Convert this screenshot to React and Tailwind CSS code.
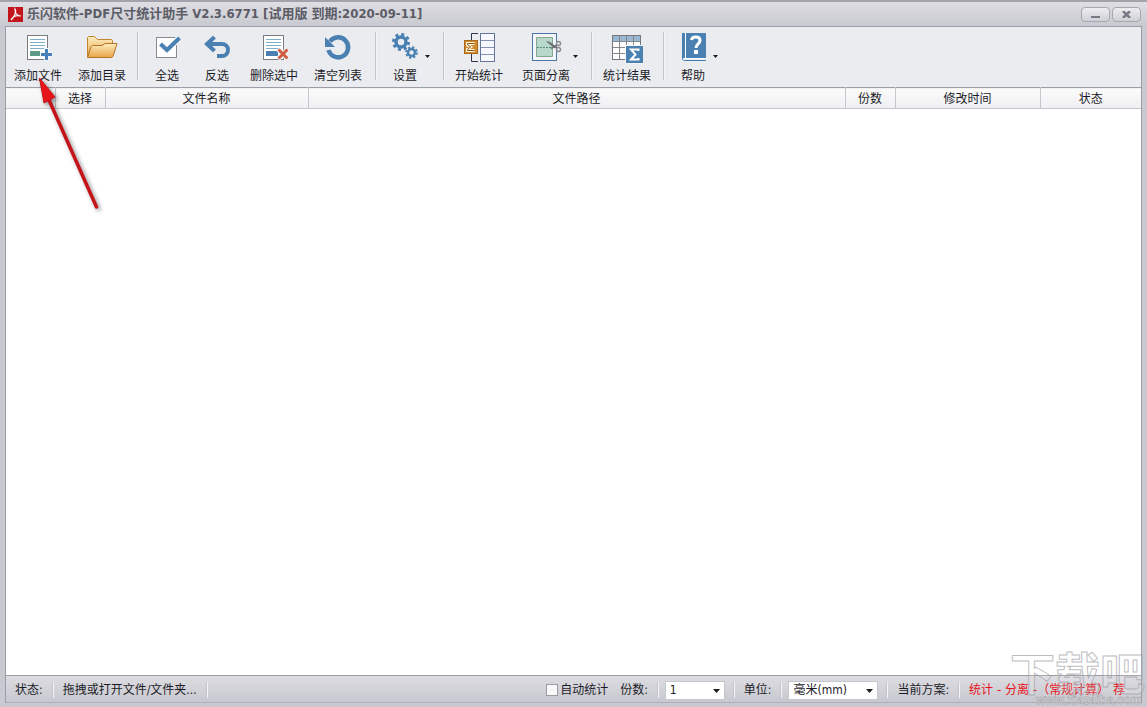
import React from 'react';

const FONT = "font-['DejaVu_Sans_Condensed','Noto_Sans_CJK_SC',sans-serif]";

const PageLines = () => (
  <>
    <rect x="5.5" y="3.5" width="20" height="24" fill="#fff" stroke="#7c7c7c" />
    <path d="M8 7.5h15M8 10.5h15M8 13.5h15M8 16.5h15" stroke="#7fb0c8" />
  </>
);

const AddFileIcon = () => (
  <svg className="h-8 w-8" viewBox="0 0 32 32" fill="none">
    <PageLines />
    <rect x="8" y="19" width="10" height="5" fill="#5e9c87" />
    <path d="M24.5 16v13M18 22.5h13" stroke="#f4f5f9" strokeWidth="5" />
    <path d="M24.5 17v11M19 22.5h11" stroke="#4580b8" strokeWidth="3" />
  </svg>
);

const FolderIcon = () => (
  <svg className="h-8 w-8" viewBox="0 0 32 32" fill="none">
    <defs>
      <linearGradient id="folder" x1="0" y1="0" x2="0" y2="1">
        <stop offset="0" stopColor="#fdedc0" />
        <stop offset="1" stopColor="#e9a446" />
      </linearGradient>
    </defs>
    <path d="M1.5 25V5.5l1-1h6l3 3h14l1 1V13" fill="url(#folder)" stroke="#c1862f" />
    <path d="M1.5 25.5 5 15l1.500-1.500H16l3-2h12L27 24.500l-1.500 1z" fill="url(#folder)" stroke="#b57424" />
  </svg>
);

const CheckIcon = () => (
  <svg className="h-8 w-8" viewBox="0 0 32 32" fill="none">
    <rect x="5.5" y="5.5" width="20" height="20" fill="#fff" stroke="#8a8a8c" />
    <path d="m9.500 12.500 7 6L28 6" stroke="#f7f8fb" strokeWidth="6" />
    <path d="m9.500 12 6.500 6L28.500 6" stroke="#4a80b2" strokeWidth="4" />
  </svg>
);

const InvertIcon = () => (
  <svg className="h-8 w-8" viewBox="0 0 32 32" fill="none">
    <path d="M6 12h15a6 6 0 0 1 0 12h-5" stroke="#4a80b2" strokeWidth="4" />
    <path d="M13.5 5 6 12l7.500 7" stroke="#4a80b2" strokeWidth="4" />
  </svg>
);

const DeleteIcon = () => (
  <svg className="h-8 w-8" viewBox="0 0 32 32" fill="none">
    <PageLines />
    <rect x="8" y="19" width="12" height="5" fill="#4a80b2" />
    <path d="m20 17 10 10M30 17 20 27" stroke="#f4f5f9" strokeWidth="5" />
    <path d="m20.500 17.500 9 9M29.500 17.500l-9 9" stroke="#cf5b40" strokeWidth="3" />
  </svg>
);

const RefreshIcon = () => (
  <svg className="h-8 w-8" viewBox="0 0 32 32" fill="none">
    <path d="M8 9.500A10 10 0 1 1 6.500 18" stroke="#4a80b2" strokeWidth="4.500" />
    <path d="M3 5v10h10z" fill="#4a80b2" />
  </svg>
);

const GearsIcon = () => (
  <svg className="h-8 w-8" viewBox="0 0 32 32" fill="none" stroke="#4a80b2">
    <circle cx="12" cy="10" r="5" strokeWidth="3.500" />
    <circle cx="12" cy="10" r="7.500" strokeWidth="3" strokeDasharray="3 2.890" />
    <circle cx="22.500" cy="20.500" r="3.500" strokeWidth="2.500" />
    <circle cx="22.500" cy="20.500" r="5.300" strokeWidth="2" strokeDasharray="2.200 1.963" />
  </svg>
);

const StartIcon = () => (
  <svg className="h-8 w-8" viewBox="0 0 32 32" fill="none">
    <path d="M15 1.500H8.500V8M8.500 22v7.500H15" stroke="#2c3454" />
    <rect x="17.500" y="1.500" width="14" height="28" fill="#f6f8fe" stroke="#64759a" />
    <path d="M18 8.500h13M18 15.500h13M18 22.500h13" stroke="#8293b8" />
    <rect x="1.500" y="8.500" width="13" height="13" fill="#d08a30" stroke="#ad681c" />
    <path d="M11.500 11.500h-7v1.500l3 2-3 2v1.500h7" stroke="#fff3d8" strokeWidth="3" />
    <path d="M11.500 11.500h-7v1l3 2.500-3 2.500v1h7" stroke="#8a5318" />
  </svg>
);

const SplitIcon = () => (
  <svg className="h-8 w-8" viewBox="0 0 32 32" fill="none">
    <rect x="2.500" y="1.500" width="24" height="27" fill="#f5f6fb" stroke="#4a76a8" />
    <path d="M6.500 5.500h16v19h-16z" fill="#b7d8ca" stroke="#84a796" />
    <path d="M7 15.500h15" stroke="#5c8f7a" strokeDasharray="2 1" />
    <path d="M16 9c3 0 6 2 11 6.500l-2 1c-4-3-7-5-9-7.500z" fill="#707377" />
    <path d="m21 16.500 6-3.500" stroke="#707377" strokeWidth="2" />
    <circle cx="28.500" cy="11.500" r="2" stroke="#8a8c90" strokeWidth="1.500" />
    <circle cx="28.500" cy="17.500" r="2" stroke="#8a8c90" strokeWidth="1.500" />
  </svg>
);

const ResultIcon = () => (
  <svg className="h-8 w-8" viewBox="0 0 32 32" fill="none">
    <rect x="1.500" y="3.500" width="28" height="24" fill="#fff" stroke="#77787c" />
    <rect x="2" y="4" width="27" height="5" fill="#9ab8d4" />
    <path d="M2 9.500h27M2 15.500h27M2 21.500h27M8.500 4v23M15.500 4v23M22.500 4v23" stroke="#85868a" />
    <rect x="14" y="13" width="18" height="19" fill="#f4f5f9" />
    <rect x="15" y="14" width="17" height="17" fill="#4a80b2" />
    <path d="M27.500 19v-1.500H20l4.500 5-4.500 5h7.500V26" stroke="#fff" strokeWidth="2" />
  </svg>
);

const HelpIcon = () => (
  <svg className="h-8 w-8" viewBox="0 0 32 32" fill="none">
    <path d="M5 1h24v25H5z" fill="#4a80b2" />
    <path d="M8.500 1v25" stroke="#fff" />
    <path d="M5.500 2v25.500a2 2 0 0 0 2 1H29" stroke="#4a80b2" />
    <path d="M7 26.500h22" stroke="#fff" />
    <path d="M14.500 8c.5-4 8.500-4 8.500.5 0 3.500-4 3.500-4 7.500" stroke="#fff" strokeWidth="3" />
    <rect x="17" y="18" width="4" height="4" fill="#fff" />
  </svg>
);

const Caret = () => (
  <svg className="mt-[23px] h-[3px] w-[5px] shrink-0" viewBox="0 0 5 3">
    <path d="M0 0h5L2.500 3z" fill="#1a1a20" />
  </svg>
);

const Separator = ({ className = 'mx-[3px] h-12' }) => (
  <span className={`w-0.5 shrink-0 border-l border-[#c3c4ca] bg-[#f4f4f6] ${className}`} />
);

const ToolButton = ({ icon, label, width = 'w-16', menu = false }) => (
  <button type="button" className="flex shrink-0 items-start" aria-haspopup={menu ? 'menu' : undefined}>
    <span className={`flex flex-col items-center gap-1 whitespace-nowrap ${width}`}>
      {icon}
      <span className="leading-4">{label}</span>
    </span>
    {menu && <Caret />}
  </button>
);

const TitleBar = () => (
  <header className="flex h-[26px] items-center justify-between border-t-2 border-[#a3a3ad] bg-linear-to-b from-[#dedee3] to-[#c9cad1] pr-1.5 pl-2">
    <div className="flex items-center gap-1">
      <svg className="h-[15px] w-[15px]" viewBox="0 0 15 15" fill="none">
        <rect width="15" height="15" fill="#c3161c" />
        <path d="M7 2c2 3-1 8-4 11 2-4 6-5 10-4-4 0-6-3-6-7z" stroke="#fff" strokeWidth="1.200" />
      </svg>
      <h1 className="text-[13px] leading-4 font-bold whitespace-nowrap text-[#5c5c66]">
        乐闪软件-PDF尺寸统计助手 V2.3.6771 [试用版 到期:2020-09-11]
      </h1>
    </div>
    <div className="flex gap-0.5">
      <button
        type="button"
        aria-label="最小化"
        className="flex h-[15px] w-[29px] justify-center rounded-sm border border-[#a6a7af] bg-linear-to-b from-[#eeeef1] to-[#cfd0d6] pt-2"
      >
        <span className="h-0.5 w-[9px] bg-[#787984]" />
      </button>
      <button
        type="button"
        aria-label="关闭"
        className="flex h-[15px] w-[29px] items-center justify-center rounded-sm border border-[#a6a7af] bg-linear-to-b from-[#eeeef1] to-[#cfd0d6]"
      >
        <svg className="h-[7px] w-[9px]" viewBox="0 0 9 7">
          <path d="m1 0 7 7M8 0 1 7" stroke="#787984" strokeWidth="2.500" />
        </svg>
      </button>
    </div>
  </header>
);

const Toolbar = () => (
  <nav className="flex h-[60px] shrink-0 items-start bg-[#ebecf0] pt-[5px]">
    <ToolButton icon={<AddFileIcon />} label="添加文件" />
    <ToolButton icon={<FolderIcon />} label="添加目录" />
    <Separator />
    <ToolButton icon={<CheckIcon />} label="全选" width="w-[50px]" />
    <ToolButton icon={<InvertIcon />} label="反选" width="w-[50px]" />
    <ToolButton icon={<DeleteIcon />} label="删除选中" />
    <ToolButton icon={<RefreshIcon />} label="清空列表" />
    <Separator className="mr-2 ml-[5px] h-12" />
    <ToolButton icon={<GearsIcon />} label="设置" width="w-10" menu />
    <Separator className="mr-0.5 ml-[13px] h-12" />
    <ToolButton icon={<StartIcon />} label="开始统计" />
    <span className="w-2 shrink-0" />
    <ToolButton icon={<SplitIcon />} label="页面分离" width="w-[54px]" menu />
    <Separator className="mr-0.5 ml-[13px] h-12" />
    <ToolButton icon={<ResultIcon />} label="统计结果" />
    <Separator className="mr-2 ml-1 h-12" />
    <ToolButton icon={<HelpIcon />} label="帮助" width="w-10" menu />
  </nav>
);

const columns = [
  { label: '', width: 'w-[49px]' },
  { label: '选择', width: 'w-[50px]' },
  { label: '文件名称', width: 'w-[203px]' },
  { label: '文件路径', width: '' },
  { label: '份数', width: 'w-[50px]' },
  { label: '修改时间', width: 'w-[145px]' },
  { label: '状态', width: 'w-[101px]' },
];

const FileTable = () => (
  <main className="grow bg-white">
    <table className="w-full table-fixed border-collapse">
      <thead>
        <tr className="border-y border-t-[#9b9ca5] border-b-[#c6c6cb] bg-linear-to-b from-[#fbfbfc] to-[#f0f0f2]">
          {columns.map((col, i) => (
            <th
              key={i}
              scope="col"
              className={`h-5 border-r border-[#c6c6cb] px-0 pt-0.5 pb-0 leading-[18px] font-normal last:border-r-0 ${col.width}`}
            >
              {col.label}
            </th>
          ))}
        </tr>
      </thead>
      <tbody />
    </table>
  </main>
);

const StatusSelect = ({ id, width, options }) => (
  <div className={`relative ${width}`}>
    <select
      id={id}
      className="block h-[19px] w-full appearance-none border border-[#c6c7ce] bg-white pl-1 leading-4"
    >
      {options.map((option) => (
        <option key={option}>{option}</option>
      ))}
    </select>
    <svg className="pointer-events-none absolute top-2 right-[5px] h-1 w-[7px]" viewBox="0 0 7 4">
      <path d="M0 0h7L3.500 4z" fill="#1a1a20" />
    </svg>
  </div>
);

const StatusBar = () => (
  <footer className="flex h-7 shrink-0 items-center border-y border-t-[#9b9ca5] border-b-[#aeafb8] bg-linear-to-b from-[#dcdce1] to-[#c8c9d0] pt-0.5 pr-4 pl-[9px] whitespace-nowrap">
    <span>状态:</span>
    <Separator className="mx-[9px] h-4" />
    <span>拖拽或打开文件/文件夹...</span>
    <Separator className="mx-[9px] h-4" />
    <div className="ml-auto flex items-center">
      <label className="flex items-center gap-0.5">
        <input
          type="checkbox"
          className="h-3 w-3 appearance-none border border-[#9a9ba4] bg-[#f8f8f8]"
        />
        自动统计
      </label>
      <label htmlFor="copies" className="ml-3">份数:</label>
      <Separator className="mr-1.5 ml-[9px] h-4" />
      <StatusSelect id="copies" width="w-[60px]" options={['1', '2', '3']} />
      <Separator className="mr-[9px] ml-2 h-4" />
      <label htmlFor="unit">单位:</label>
      <Separator className="mr-1.5 ml-[9px] h-4" />
      <StatusSelect id="unit" width="w-[90px]" options={['毫米(mm)', '厘米(cm)']} />
      <Separator className="mr-[9px] ml-2 h-4" />
      <span>当前方案:</span>
      <Separator className="mx-[9px] h-4" />
      <span className="font-['DejaVu_Sans','Noto_Sans_CJK_SC',sans-serif] text-[#e8141c]">
        统计 - 分离 -（常规计算） 荐
      </span>
    </div>
  </footer>
);

const PointerArrow = () => (
  <svg
    className="pointer-events-none absolute top-[76px] left-[34px] h-[140px] w-[72px]"
    viewBox="0 0 72 140"
  >
    <g className="drop-shadow-[2px_2px_2px_rgba(0,0,0,0.45)]">
      <path d="M62.500 131 15 24" stroke="#c4141a" strokeWidth="3.500" strokeLinecap="round" />
      <path d="M5.500 2 21 21 10 27z" fill="#e8141a" stroke="#c41217" />
    </g>
  </svg>
);

const Watermark = () => (
  <svg
    className="pointer-events-none absolute right-0 bottom-0 h-[60px] w-[140px]"
    viewBox="0 0 140 60"
    fill="#ffffff"
    fillOpacity="0.15"
    stroke="#a0a0a6"
    strokeOpacity="0.7"
  >
    <text x="3" y="44" fontSize="45" fontWeight="700">下载吧</text>
    <text
      x="29"
      y="57"
      fillOpacity="0.4"
      strokeWidth="0.800"
      className="font-['Liberation_Sans',sans-serif] text-xs font-bold"
    >
      www.xiazaiba.com
    </text>
  </svg>
);

export default function App() {
  return (
    <div
      className={`relative flex min-h-screen flex-col overflow-hidden bg-[#c9cad1] text-xs text-[#1c1c28] ${FONT}`}
    >
      <TitleBar />
      <div className="mx-[5px] mb-1 flex grow flex-col border-x border-t border-[#9b9ca5]">
        <Toolbar />
        <FileTable />
        <StatusBar />
      </div>
      <PointerArrow />
      <Watermark />
    </div>
  );
}
